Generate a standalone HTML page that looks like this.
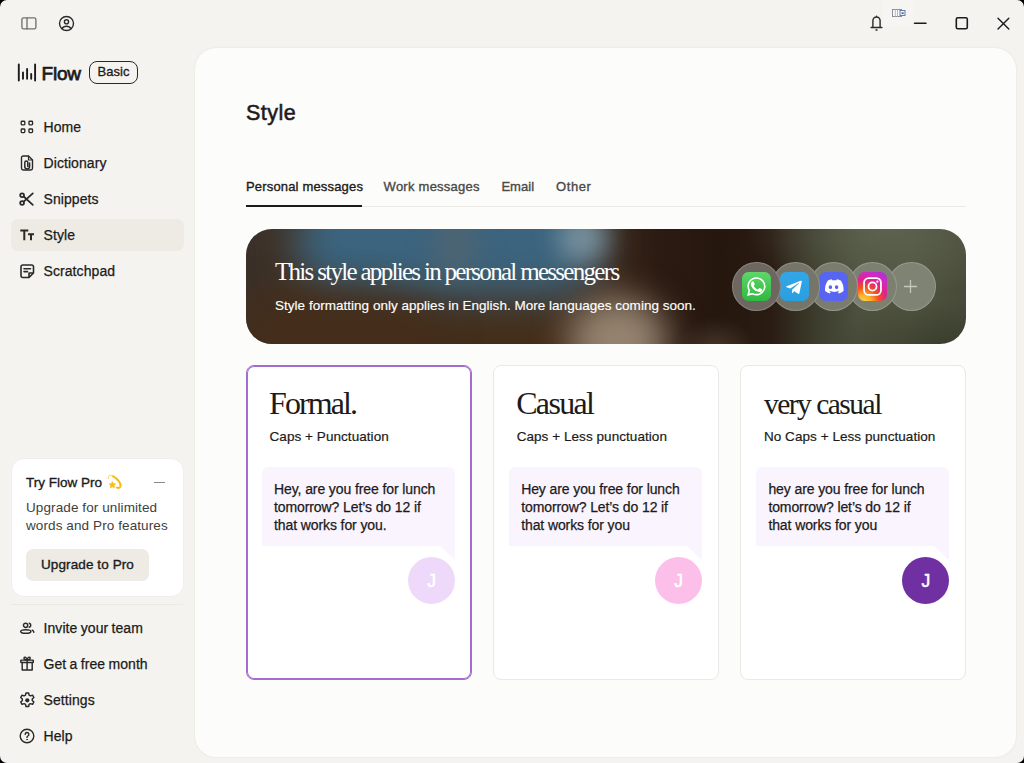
<!DOCTYPE html>
<html lang="en">
<head>
<meta charset="utf-8">
<title>Flow</title>
<style>
*{box-sizing:border-box;margin:0;padding:0}
html,body{width:1024px;height:763px;overflow:hidden;background:#000}
body{font-family:"Liberation Sans",sans-serif;color:#1c1b1a;position:relative}
#win{position:absolute;left:0;top:0;width:1024px;height:763px;background:#f4f3ef;border-radius:7px;overflow:hidden}
.abs{position:absolute}
#panel{position:absolute;left:195px;top:47.500px;width:821px;height:709.500px;background:#fcfcfa;border-radius:21px;box-shadow:0 0 2px rgba(110,90,50,.14)}
.nav{position:absolute;left:11px;width:173px;height:32px;border-radius:7px;font-size:14px;font-weight:500;line-height:32px;padding-left:32.500px;letter-spacing:.08px;word-spacing:-.7px;color:#1c1b1a;-webkit-text-stroke:.25px #1c1b1a}
.nav.sel{background:#edebe4}
.nav svg{position:absolute;left:8px;top:8px;width:16px;height:16px}
h1{position:absolute;left:246px;top:99.500px;font-size:21.5px;font-weight:400;letter-spacing:.5px;-webkit-text-stroke:.55px #1c1b1a;line-height:26px}
.tab{position:absolute;top:178.500px;font-size:13px;line-height:16px;letter-spacing:.08px;color:#4a4947;-webkit-text-stroke:.35px #4a4947}
.tab.on{color:#1c1b1a;-webkit-text-stroke:.35px #1c1b1a}
#tabline{position:absolute;left:246px;top:206px;width:720px;height:1px;background:#ebe9e4}
#tabon{position:absolute;left:246px;top:205px;width:116px;height:2px;background:#1c1b1a}
#banner{position:absolute;left:246px;top:229px;width:720px;height:115px;border-radius:26px;overflow:hidden;background:
radial-gradient(ellipse 40px 34px at 470px 122px,rgba(95,78,62,.6) 0%,rgba(95,78,62,0) 100%),
radial-gradient(ellipse 140px 70px at 640px 0px,rgba(96,102,82,.8) 0%,rgba(96,102,82,0) 100%),
radial-gradient(ellipse 120px 50px at 700px 120px,rgba(52,56,40,.8) 0%,rgba(52,56,40,0) 100%),
linear-gradient(90deg,#3a312a 0%,#422e1d 8%,#452e1a 42%,#3e2b1d 50%,#2c1b12 57%,#25160e 66%,#2a1c13 73%,#3c3c2c 79%,#4c503d 85%,#50543f 92%,#484b39 100%)}
.blob{position:absolute;border-radius:50%}
.card{position:absolute;top:365px;width:225.670px;height:315px;background:#fff;border:1px solid #ebe9e6;border-radius:8px}
.card.on{border-color:#a46bd0;box-shadow:inset 0 0 0 1px #a46bd0}
.card h2{position:absolute;left:22px;top:17px;font-family:"Liberation Serif",serif;font-weight:400;font-size:32px;line-height:40px;letter-spacing:-1.7px;color:#1c1b1a;white-space:nowrap}
.card .sub{position:absolute;left:22.500px;top:63px;font-size:13.5px;line-height:16px;letter-spacing:.06px;-webkit-text-stroke:.2px #1c1b1a;white-space:nowrap}
.bub{position:absolute;left:15px;top:101px;width:193px;height:79px;background:#faf4fe;border-radius:6px 6px 0 0;font-size:14px;line-height:18px;padding:12.500px 12px;letter-spacing:-.1px;-webkit-text-stroke:.25px #1c1b1a;white-space:nowrap}
.bub:after{content:"";position:absolute;right:0;top:79px;border-top:14px solid #faf4fe;border-left:15px solid transparent}
.av{position:absolute;left:161px;top:191px;width:47px;height:47px;border-radius:50%;color:#fff;font-size:17.5px;text-align:center;line-height:48px;-webkit-text-stroke:.5px #fff}

.ico{position:absolute;overflow:visible;fill:none;stroke:#2b2a29;stroke-width:1.4;stroke-linecap:round;stroke-linejoin:round}
#logo{position:absolute;left:41.500px;top:61.500px;font-size:19px;font-weight:400;line-height:24px;letter-spacing:-.2px;color:#1c1b1a;-webkit-text-stroke:.75px #1c1b1a}
#badge{position:absolute;left:89px;top:61px;width:49px;height:23px;border:1px solid #2b2a29;border-radius:8px;font-size:13px;font-weight:500;line-height:20px;text-align:center;-webkit-text-stroke:.3px #1c1b1a}
#pro{position:absolute;left:11px;top:458px;width:173px;height:139px;background:#fff;border-radius:13px;border:1px solid #f0eeea}
#pro .t{position:absolute;left:14px;top:15.500px;font-size:13.5px;line-height:16px;-webkit-text-stroke:.35px #1c1b1a;white-space:nowrap}
#pro .d{position:absolute;left:14px;top:40px;font-size:13.5px;line-height:18px;color:#3f3e3c;white-space:nowrap;letter-spacing:.1px}
#pro .b{position:absolute;left:14px;top:90px;width:123px;height:32px;border-radius:7px;background:#edebe4;font-size:13.5px;line-height:32px;text-align:center;-webkit-text-stroke:.35px #1c1b1a;letter-spacing:.1px}
#pro .m{position:absolute;left:142px;top:23px;width:11px;height:1.4px;background:#8a8986}
#sdiv{position:absolute;left:11px;top:604px;width:172px;height:1px;background:#ebe9e4}
#bt{position:absolute;left:29px;top:26.500px;font-family:"Liberation Serif",serif;font-size:25px;line-height:32px;letter-spacing:-1.7px;color:#fff;white-space:nowrap}
#bs{position:absolute;left:29px;top:69px;font-size:13.5px;line-height:16px;color:#fff;white-space:nowrap;letter-spacing:.02px;-webkit-text-stroke:.15px #fff}
.app{position:absolute;top:33px;width:49px;height:49px;border-radius:50%;border:1.5px solid rgba(255,255,255,.2)}
.app svg{position:absolute;left:8.5px;top:8.5px;width:29px;height:29px}
</style>
</head>
<body>
<div id="win">
<div id="panel"></div>
<svg class="ico" style="left:21px;top:17px;width:16px;height:13px" viewBox="0 0 16 13"><g style="stroke:#72716e;stroke-width:1.35"><rect x=".9" y=".9" width="14" height="11" rx="1.6"/><path d="M6 .9v11"/></g></svg>
<svg class="ico" style="left:58px;top:15px;width:17px;height:17px" viewBox="0 0 17 17"><circle cx="8.500" cy="8.500" r="7"/><circle cx="8.500" cy="6.800" r="2.100"/><path d="M4 13.600c.9-1.600 2.500-2.400 4.500-2.400s3.600.8 4.500 2.400"/></svg>
<svg class="ico" style="left:17px;top:62px;width:20px;height:20px" viewBox="0 0 20 20"><path style="stroke-width:1.9;stroke:#1c1b1a" d="M1.800 2.400v16.200M6 10.500v6.200M10.100 7v9.700M14.200 12v4.700M18.100 2.400v16.200"/></svg>
<div id="logo">Flow</div>
<div id="badge">Basic</div>

<svg class="ico" style="left:868px;top:13.200px;width:18px;height:19px" viewBox="0 0 18 19"><path style="stroke:#2b2a29;stroke-width:1.400" d="M4.900 14.200V7.600a3.600 3.600 0 0 1 7.200 0v6.600M3.100 14.500h10.800M8 17h1M8.500 3.300v.7"/></svg>
<div class="abs" style="left:883px;top:0;width:30px;height:26px;background:#f6f5f2"></div>
<svg class="abs" style="left:891.500px;top:9px;width:16px;height:11px" viewBox="0 0 16 11"><rect x=".5" y=".5" width="9" height="7" fill="#fbfbfd" stroke="#8a8f99" stroke-width="1"/><path d="M3.300 .5v7M5.500 .5v7" stroke="#b5b9c2" stroke-width="1"/><rect x="8" y="1.500" width="5" height="5" fill="#f1f4fa" stroke="#5f7fb0" stroke-width="1"/><rect x="9.600" y="3.500" width="2" height="1.300" fill="#2b3350"/></svg>
<svg class="ico" style="left:912px;top:15px;width:16px;height:16px" viewBox="0 0 16 16"><path style="stroke:#1c1b1a;stroke-width:1.500" d="M2.500 8.300h11.500"/></svg>
<svg class="ico" style="left:954px;top:15px;width:16px;height:16px" viewBox="0 0 16 16"><rect style="stroke:#1c1b1a;stroke-width:1.600" x="2.300" y="2.800" width="11" height="11" rx="1.500"/></svg>
<svg class="ico" style="left:995px;top:15px;width:16px;height:16px" viewBox="0 0 16 16"><path style="stroke:#1c1b1a;stroke-width:1.400" d="M3 3.300l10.800 10.800M13.800 3.300L3 14.100"/></svg>

<div id="pro">
  <div class="t">Try Flow Pro</div>
  <svg class="abs" style="left:94px;top:13px;width:18px;height:18px;overflow:visible" viewBox="0 0 18 18"><path d="M2.300 6.500C1.900 2.800 4.500 2.700 7.500 4.500" fill="none" stroke="#f9cf4a" stroke-width="1" stroke-linecap="round"/><path d="M7 4.200C11.500 6.800 15.300 11.500 14.400 14.300C13.800 16 12 16.300 10.800 15.500" fill="none" stroke="#f6bd16" stroke-width="2" stroke-linecap="round"/><path d="M6.400 9.700l.95 2 2.200.3-1.600 1.500.4 2.200-1.950-1.050-1.950 1.050.4-2.200-1.600-1.500 2.200-.3z" fill="#f6bd16" stroke="#f6bd16" stroke-width=".8" stroke-linejoin="round"/></svg>
  <div class="m"></div>
  <div class="d">Upgrade for unlimited<br>words and Pro features</div>
  <div class="b">Upgrade to Pro</div>
</div>
<div id="sdiv"></div>


<div class="nav" style="top:111px"><svg class="ico" viewBox="0 0 16 16"><g style="stroke-width:1.35"><rect x="2.2" y="2.2" width="3.6" height="3.6" rx=".8"/><rect x="9.950" y="2.2" width="3.6" height="3.6" rx=".8"/><rect x="2.2" y="9.950" width="3.6" height="3.6" rx=".8"/><rect x="9.950" y="9.950" width="3.6" height="3.6" rx=".8"/></g></svg>Home</div>
<div class="nav" style="top:147px"><svg class="ico" viewBox="0 0 16 16"><path d="M9.5 1H4.2A1.7 1.7 0 0 0 2.5 2.7v10.6A1.7 1.7 0 0 0 4.200 15h7.600a1.700 1.700 0 0 0 1.700-1.700V5z"/><path d="M9.500 1v4h4" style="stroke-width:1.2"/><path style="stroke-width:1.5" d="M10.600 8v3.600a2.400 2.400 0 0 1-4.800 0V7.600a1.500 1.500 0 0 1 3 0v3.800"/></svg>Dictionary</div>
<div class="nav" style="top:183px"><svg class="ico" viewBox="0 0 16 16"><g style="stroke-width:1.75"><circle cx="3.100" cy="4.200" r="1.900"/><circle cx="3.100" cy="12" r="1.900"/><path d="M4.700 5.500 13.800 13.800M4.700 10.700 13.800 2.400"/></g></svg>Snippets</div>
<div class="nav sel" style="top:219px"><svg class="ico" viewBox="0 0 16 16"><path d="M1.300 3.500h8M5.300 3.500v9.800M9 7.300h6M12 7.300v6" style="stroke-width:2;stroke-linecap:butt"/></svg>Style</div>
<div class="nav" style="top:255px"><svg class="ico" viewBox="0 0 16 16"><path style="stroke-width:1.6" d="M10 14.500H3.700A1.700 1.700 0 0 1 2 12.800V3.700A1.700 1.700 0 0 1 3.700 2h9.100a1.700 1.700 0 0 1 1.700 1.700V10zM10 14.500V10h4.500M5 5.800h6.500M5 8.600h3.500"/></svg>Scratchpad</div>

<div class="nav" style="top:612px"><svg class="ico" viewBox="0 0 16 16"><g style="stroke-width:1.5"><circle cx="6.600" cy="5.300" r="2.150"/><ellipse cx="6.800" cy="11.500" rx="5.100" ry="1.800"/><path d="M10.300 3.300a2.100 2.100 0 0 1 0 4M13.300 10.200c1 .5 1.500 1.200 1.500 2.100"/></g></svg>Invite your team</div>
<div class="nav" style="top:648px"><svg class="ico" viewBox="0 0 16 16"><g style="stroke-width:1.45"><rect x="1.800" y="4.100" width="12.500" height="2.300" rx=".5"/><path d="M3.200 6.500v7.400h10V6.500M8.100 4.100v9.800M8.100 4C6.600 4 5 3.400 5 2.100 5 .6 7.500.5 8.100 4zM8.100 4c1.500 0 3.100-.6 3.100-1.900C11.200.6 8.700.5 8.100 4z"/></g></svg>Get a free month</div>
<div class="nav" style="top:684px"><svg class="ico" style="left:7.300px;top:7.100px;width:18.600px;height:18.600px" viewBox="0 0 24 24"><path style="stroke-width:1.9" d="M10.300 2.500h3.400l.6 2.800 1.800 1 2.700-.9 1.700 3-2.100 1.900v2l2.100 1.900-1.700 3-2.700-.9-1.800 1-.6 2.800h-3.400l-.6-2.800-1.800-1-2.700.9-1.700-3 2.100-1.900v-2L3.500 8.400l1.700-3 2.700.9 1.800-1z"/><circle cx="12" cy="12" r="2.700" style="fill:#2b2a29;stroke:none"/></svg>Settings</div>
<div class="nav" style="top:720px"><svg class="ico" viewBox="0 0 16 16"><circle cx="8" cy="8" r="6.800"/><path d="M6.200 6.400a1.850 1.850 0 1 1 2.700 1.600c-.6.350-.9.700-.9 1.400"/><circle cx="8" cy="11.600" r=".5" style="fill:#2b2a29;stroke-width:.6"/></svg>Help</div>

<h1>Style</h1>
<div class="tab on" style="left:246px;letter-spacing:.17px">Personal messages</div>
<div class="tab" style="left:383.600px;letter-spacing:.25px">Work messages</div>
<div class="tab" style="left:501.400px;letter-spacing:.05px">Email</div>
<div class="tab" style="left:556px;letter-spacing:.6px">Other</div>
<div id="tabline"></div><div id="tabon"></div>

<div id="banner">
<div class="blob" style="left:50px;top:-45px;width:300px;height:112px;border-radius:40px;background:#3c647e;filter:blur(20px)"></div>
<div class="blob" style="left:-30px;top:58px;width:230px;height:90px;background:#452e1b;filter:blur(18px);opacity:.9"></div>
<div class="blob" style="left:190px;top:-20px;width:40px;height:70px;background:#5b666b;filter:blur(14px);opacity:.6"></div>
<div class="blob" style="left:312px;top:-16px;width:50px;height:50px;background:#88a0ad;filter:blur(13px);opacity:.8"></div>
<div class="blob" style="left:322px;top:68px;width:100px;height:85px;background:#958370;filter:blur(17px)"></div>
<div id="bt">This style applies in personal messengers</div>
<div id="bs">Style formatting only applies in English. More languages coming soon.</div>
<div class="app" style="left:640.8px;background:#7e8374"><svg viewBox="0 0 36 36"><path d="M18 10v16M10 18h16" stroke="rgba(255,255,255,.55)" stroke-width="1.600" fill="none"/></svg></div>
<div class="app" style="left:602.1px;background:#7c8070"><svg viewBox="0 0 36 36"><defs><radialGradient id="gi" cx=".2" cy="1.050" r="1.150"><stop offset="0" stop-color="#ffd54f"/><stop offset=".22" stop-color="#fdb12c"/><stop offset=".45" stop-color="#f4511e"/><stop offset=".68" stop-color="#e0238a"/><stop offset=".9" stop-color="#cf2bc4"/><stop offset="1" stop-color="#b52fd0"/></radialGradient></defs><rect width="36" height="36" rx="8" fill="url(#gi)"/><rect x="7.500" y="7.500" width="21" height="21" rx="6" fill="none" stroke="#fff" stroke-width="2.200"/><circle cx="18" cy="18" r="5" fill="none" stroke="#fff" stroke-width="2.200"/><circle cx="24" cy="12" r="1.400" fill="#fff"/></svg></div>
<div class="app" style="left:563.4px;background:#7a7d6d"><svg viewBox="0 0 36 36"><rect width="36" height="36" rx="8" fill="#5865f2"/><path d="M27.300 10.300A19 19 0 0 0 22.600 8.800l-.6 1.200a17.600 17.600 0 0 0-5.300 0c-.2-.4-.4-.9-.6-1.200-1.700.3-3.300.8-4.800 1.500C8.300 14.700 7.500 19 7.900 23.300a19.200 19.200 0 0 0 5.900 3l1.200-2a12 12 0 0 1-2-.9l.5-.4a13.700 13.700 0 0 0 11.700 0l.5.400c-.6.400-1.300.7-2 .9l1.300 2c2.200-.7 4.100-1.700 5.800-3 .5-5-.8-9.300-3.500-13zm-12.800 10.500c-1.100 0-2.100-1-2.100-2.300s.9-2.300 2.100-2.300 2.100 1 2.100 2.300-.9 2.300-2.100 2.300zm7.700 0c-1.100 0-2.100-1-2.100-2.300s.9-2.300 2.100-2.300 2.100 1 2.100 2.300-.9 2.300-2.100 2.300z" fill="#fff" transform="translate(-.35 .3)"/></svg></div>
<div class="app" style="left:524.7px;background:#75756a"><svg viewBox="0 0 36 36"><defs><linearGradient id="gt" x1="0" y1="0" x2="0" y2="1"><stop offset="0" stop-color="#33a6e8"/><stop offset="1" stop-color="#2a9fe0"/></linearGradient></defs><rect width="36" height="36" rx="8" fill="url(#gt)"/><path d="M7 17.600l20.200-7.900c1-.4 1.800.2 1.500 1.700l-3.400 16.200c-.2 1.100-.9 1.400-1.900.9l-5.200-3.900-2.500 2.400c-.3.300-.5.500-1.100.5l.4-5.300 9.700-8.800c.4-.4-.1-.6-.7-.2l-12 7.500-5.200-1.600c-1.100-.3-1.100-1.100.2-1.500z" fill="#fff" transform="translate(2.300 2.600) scale(.86)"/></svg></div>
<div class="app" style="left:486px;background:#6e6761"><svg viewBox="0 0 36 36"><defs><linearGradient id="gw" x1="0" y1="0" x2="0" y2="1"><stop offset="0" stop-color="#5fd668"/><stop offset="1" stop-color="#2fb841"/></linearGradient></defs><rect width="36" height="36" rx="8" fill="url(#gw)"/><path d="M18 7.500a10.300 10.300 0 0 0-8.900 15.500L7.700 28.300l5.400-1.400A10.300 10.300 0 1 0 18 7.500z" fill="none" stroke="#fff" stroke-width="2"/><path d="M14.300 12.800c-.3-.6-.5-.6-.8-.6h-.7c-.3 0-.7.100-1 .5-.4.400-1.300 1.300-1.300 3.100s1.300 3.600 1.500 3.800c.2.300 2.600 4.100 6.400 5.600 3.100 1.200 3.800 1 4.500.9.700-.1 2.200-.9 2.500-1.800.3-.9.300-1.600.2-1.800-.1-.2-.3-.3-.7-.5l-2.500-1.200c-.4-.1-.6-.2-.9.200-.2.400-.9 1.200-1.200 1.500-.2.200-.4.300-.8.100-.4-.2-1.600-.6-3-1.900-1.100-1-1.900-2.200-2.100-2.600-.2-.4 0-.6.200-.8l.6-.7c.2-.2.200-.4.400-.6.100-.3.100-.5 0-.7z" fill="#fff" transform="translate(1.200 .6) scale(.93)"/></svg></div>
</div>

<div class="card on" style="left:246px">
  <h2 style="letter-spacing:-1.9px">Formal.</h2><div class="sub">Caps + Punctuation</div>
  <div class="bub">Hey, are you free for lunch<br>tomorrow? Let’s do 12 if<br>that works for you.</div>
  <div class="av" style="background:#efd9fb">J</div>
</div>
<div class="card" style="left:493.170px">
  <h2 style="letter-spacing:-1.65px">Casual</h2><div class="sub">Caps + Less punctuation</div>
  <div class="bub">Hey are you free for lunch<br>tomorrow? Let’s do 12 if<br>that works for you</div>
  <div class="av" style="background:#fcbfe9">J</div>
</div>
<div class="card" style="left:740.400px">
  <h2 style="font-size:29.5px;letter-spacing:-1.5px;left:22.500px;top:18px">very casual</h2><div class="sub">No Caps + Less punctuation</div>
  <div class="bub">hey are you free for lunch<br>tomorrow? let’s do 12 if<br>that works for you</div>
  <div class="av" style="background:#7030a2">J</div>
</div>
</div>
</body>
</html>
